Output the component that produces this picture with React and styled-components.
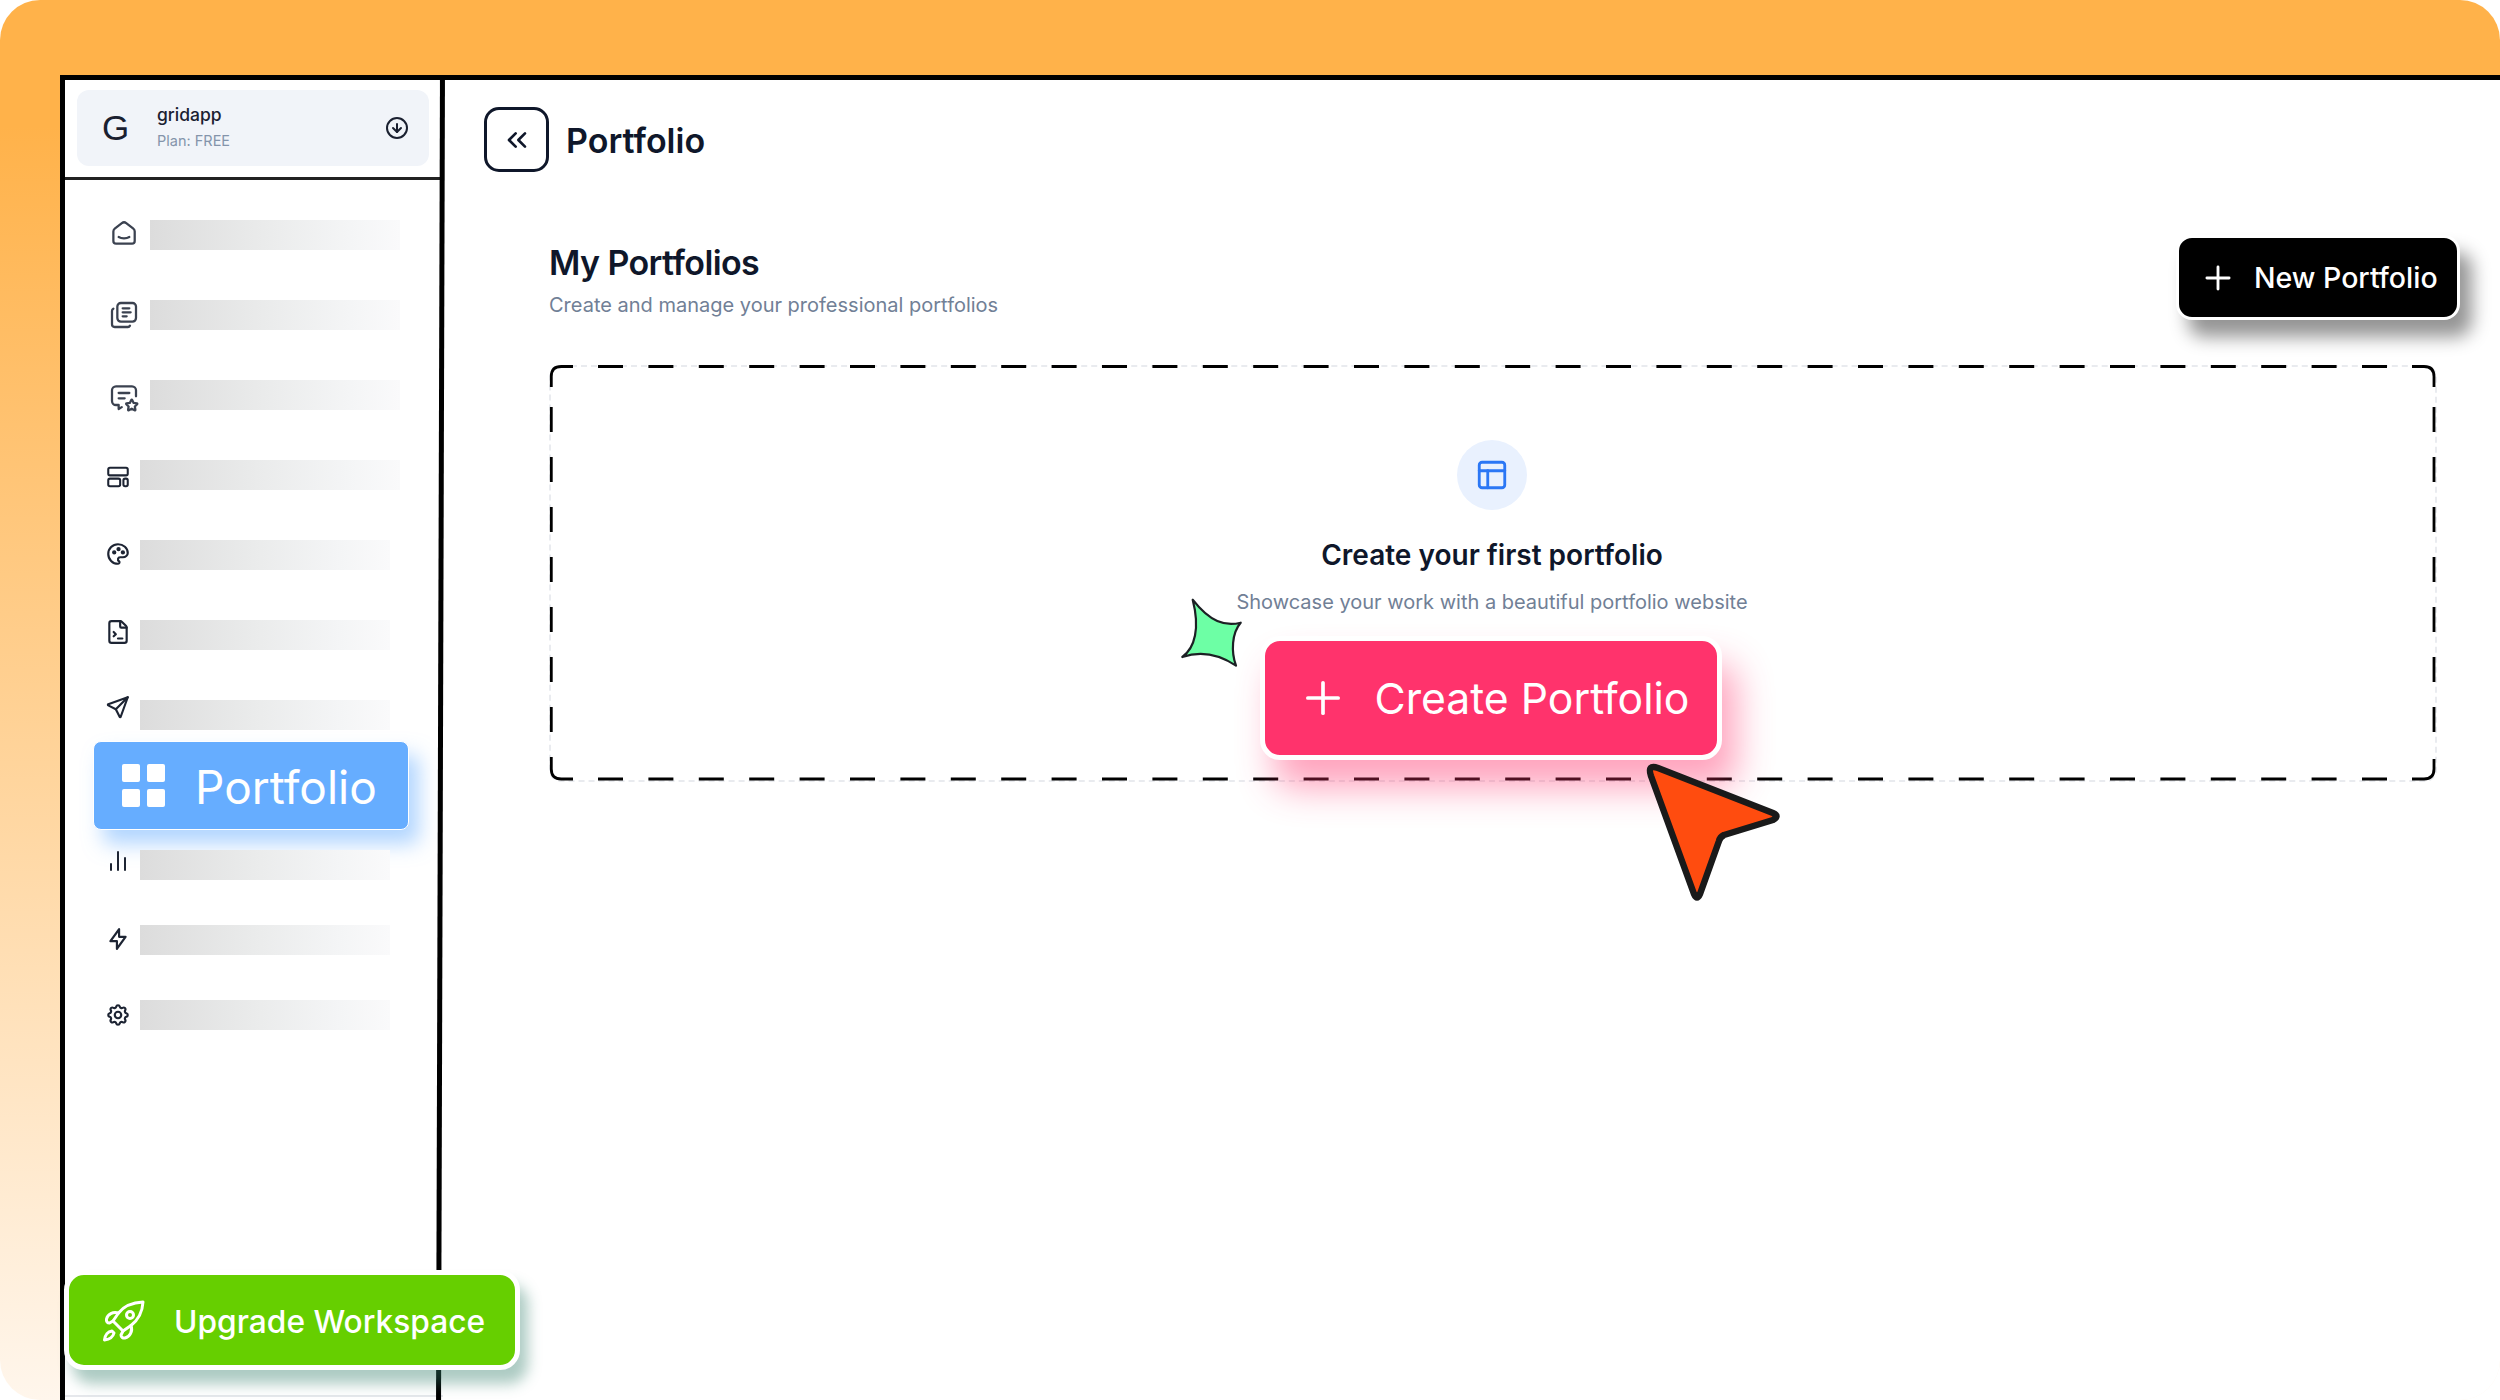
import styled, {createGlobalStyle} from "styled-components";
import {ChartNoAxesColumn, ChevronsLeft, CircleArrowDown, FileTerminal, PanelsTopLeft, Plus} from "lucide-react";
import {TbBolt, TbLibrary, TbMessageStar, TbPalette, TbSend, TbSettings, TbSmartHome} from "react-icons/tb";

const GlobalStyle = createGlobalStyle`
  * { box-sizing: border-box; }
  html, body { margin: 0; padding: 0; background: #fff; }
  body { font-family: "Inter", "Liberation Sans", sans-serif; color: #0f172a; }
`;

const Canvas = styled.div`
  width: 2500px;
  height: 1400px;
  overflow: hidden;
  border-radius: 40px;
  padding: 75px 0 0 60px;
  background: linear-gradient(180deg, #ffb24a 0%, #ffb24a 9%, #fff6ec 100%);
`;

const Frame = styled.div`
  display: flex;
  height: 100%;
  background: #fff;
  border-top: 5px solid #000;
  border-left: 5px solid #000;
`;

const Sidebar = styled.aside`
  position: relative;
  flex: 0 0 378px;
  display: flex;
  flex-direction: column;

  &::after {
    content: "";
    position: absolute;
    top: -2px;
    bottom: 0;
    right: 0;
    width: 5px;
    background: #000;
    transform: rotate(0.17deg);
  }
`;

const WorkspaceBar = styled.div`
  height: 100px;
  padding: 10px 0 0 12px;
  border-bottom: 3px solid #222;
`;

const WorkspaceCard = styled.div`
  display: flex;
  align-items: center;
  width: 352px;
  height: 76px;
  padding: 0 20px 0 25px;
  border-radius: 12px;
  background: #f1f4f9;
  color: #1a2030;
`;

const WorkspaceLetter = styled.span`
  width: 55px;
  font-family: "Liberation Sans", sans-serif;
  font-size: 35px;
`;

const WorkspaceText = styled.div`
  flex: 1;
  display: flex;
  flex-direction: column;
  gap: 7px;
  margin-top: -2px;
`;

const WorkspaceName = styled.span`
  font-size: 17.500px;
  font-weight: 500;
  line-height: 20px;
`;

const WorkspacePlan = styled.span`
  font-size: 14.500px;
  line-height: 17px;
  color: #8494ab;
`;

const Nav = styled.nav`
  display: flex;
  flex-direction: column;
  padding-top: 40px;
`;

const NavRow = styled.div`
  display: flex;
  align-items: center;
  height: 30px;
  margin-top: ${(p) => p.$top}px;
  padding-left: ${(p) => (p.$large ? 43 : 40)}px;
  gap: ${(p) => (p.$large ? 10 : 9)}px;
  color: ${(p) => (p.$large ? "#3b4250" : "#1d2433")};
`;

const IconSlot = styled.span`
  display: flex;
  flex: none;
  justify-content: center;
  width: ${(p) => (p.$large ? 32 : 26)}px;
  margin-bottom: ${(p) => p.$lift}px;
`;

const Skeleton = styled.div`
  width: ${(p) => p.$width}px;
  height: 30px;
  background: linear-gradient(90deg, #dcdcdc 0%, #eaebeb 45%, #f4f5f6 80%, #fafafb 100%);
`;

const ActiveItem = styled.div`
  display: flex;
  align-items: center;
  gap: 30px;
  width: 316px;
  height: 89px;
  margin: 11px 0 20px 28px;
  padding: 2px 0 0 28px;
  border: 1px solid #fff;
  border-radius: 8px;
  background: #66adff;
  color: #fff;
  font-size: 46px;
  box-shadow: 10px 14px 20px rgba(102, 173, 255, 0.5);
`;

const GridGlyph = styled.div`
  display: grid;
  grid-template-columns: 18px 18px;
  gap: 7px;
  margin-top: -2px;

  i {
    display: block;
    height: 18px;
    border-radius: 2px;
    background: #fff;
  }
`;

const SidebarFooter = styled.div`
  margin-top: auto;
  height: 5px;
  border-top: 2px solid #e6e8ec;
`;

const UpgradeButton = styled.button`
  position: absolute;
  z-index: 2;
  left: -1px;
  bottom: 30px;
  display: flex;
  align-items: center;
  gap: 29px;
  width: 456px;
  height: 100px;
  padding: 2px 0 0 34px;
  border: 5px solid #fff;
  border-radius: 20px;
  background: #66cf00;
  color: #fff;
  font: 500 31.700px "Inter", sans-serif;
  box-shadow: 8px 14px 14px rgba(50, 125, 105, 0.4);
`;

const Main = styled.main`
  flex: 1;
  min-width: 0;
  padding: 27px 0 0 41px;
`;

const PageHeader = styled.header`
  display: flex;
  align-items: center;
  gap: 17px;
`;

const CollapseButton = styled.button`
  display: grid;
  place-items: center;
  width: 65px;
  height: 65px;
  padding: 0;
  border: 3px solid #0f172a;
  border-radius: 15px;
  background: #fff;
  color: #0f172a;
`;

const PageTitle = styled.h1`
  margin: 2px 0 0;
  font-size: 34px;
  font-weight: 600;
`;

const Content = styled.section`
  width: 1888px;
  margin: 63px 0 0 65px;
`;

const SectionHead = styled.div`
  display: flex;
  justify-content: space-between;
  align-items: flex-start;
  height: 130px;
`;

const SectionTitle = styled.h2`
  margin: 8px 0 0;
  font-size: 34px;
  line-height: 40px;
  font-weight: 600;
  letter-spacing: -0.6px;
`;

const SectionSub = styled.p`
  margin: 9px 0 0;
  font-size: 20px;
  line-height: 26px;
  color: #718096;
`;

const NewButton = styled.button`
  display: flex;
  align-items: center;
  gap: 17px;
  width: 284px;
  height: 85px;
  margin-right: -23px;
  padding: 0 0 0 20px;
  border: 3px solid #fff;
  border-radius: 16px;
  background: #000;
  color: #fff;
  font: 500 28.500px "Inter", sans-serif;
  box-shadow: 12px 17px 18px rgba(0, 0, 0, 0.42);
`;

const EmptyBox = styled.div`
  position: relative;
  display: flex;
  flex-direction: column;
  align-items: center;
  height: 417px;
  padding: 73px 2px 0 0;
  border: 2px dashed #e9ebef;
  border-radius: 12px;
`;

const DashOverlay = styled.svg`
  position: absolute;
  left: -2px;
  top: -2px;
  overflow: visible;
`;

const IconCircle = styled.div`
  display: grid;
  place-items: center;
  width: 70px;
  height: 70px;
  border-radius: 50%;
  background: #e9f1fe;
  color: #2b77f5;
`;

const EmptyTitle = styled.h3`
  margin: 27px 0 0;
  font-size: 28px;
  line-height: 36px;
  font-weight: 600;
`;

const EmptySub = styled.p`
  margin: 16px 0 0;
  font-size: 20px;
  line-height: 26px;
  color: #718096;
`;

const CreateButton = styled.button`
  position: relative;
  display: flex;
  align-items: center;
  gap: 26px;
  width: 462px;
  height: 124px;
  margin: 21px 3px 0 0;
  padding: 0 0 0 32px;
  border: 5px solid #fff;
  border-radius: 20px;
  background: #ff336c;
  color: #fff;
  font: 400 42.700px "Inter", sans-serif;
  box-shadow: 14px 28px 36px rgba(255, 51, 108, 0.45);
`;

const Sticker = styled.svg`
  position: absolute;
  z-index: 3;
  left: ${(p) => p.$left}px;
  top: ${(p) => p.$top}px;
`;

const navTop = [
    {icon: TbSmartHome, width: 250, lift: 5},
    {icon: TbLibrary, width: 250, lift: 0},
    {icon: TbMessageStar, width: 250, lift: -3},
];

const navMiddle = [
    {icon: LayoutBlocks, width: 260, lift: -3},
    {icon: TbPalette, width: 250, lift: 3},
    {icon: FileTerminal, width: 250, lift: 6},
    {icon: TbSend, width: 250, lift: 16},
];

const navBottom = [
    {icon: ChartNoAxesColumn, width: 250, top: 0, lift: 8, size: 24},
    {icon: TbBolt, width: 250, top: 45, lift: 3},
    {icon: TbSettings, width: 250, top: 45, lift: 0},
];

function LayoutBlocks({size}) {
    return (
        <svg width={size} height={size} viewBox="0 0 24 24" fill="none" stroke="currentColor" strokeWidth="1.9">
            <rect x="3" y="3.5" width="18" height="7" rx="1.6"/>
            <rect x="3" y="13.5" width="11" height="7" rx="1.6"/>
            <rect x="17" y="13.5" width="4" height="7" rx="1.6"/>
        </svg>
    );
}

function RocketIcon() {
    return (
        <svg width="42" height="42" viewBox="0 0 42 42" fill="none" stroke="#fff" strokeWidth="3" strokeLinejoin="round" strokeLinecap="round">
            <path d="M40 2C30 2.5 21 6 15.5 13L10 21L20 31L28 25.5C35 20 39.5 11 40 2Z"/>
            <path d="M15.5 13C10 11.5 4.500 14 3.500 19C3 21.500 4.500 23 6.500 23L10 21"/>
            <path d="M28 25.500C30 31 27 37 22 38C20 38.500 18 37 18 35L20 31"/>
            <path d="M9 31C5 31.500 2 35 1.500 40C6 39.500 10 37 11 33Z"/>
            <circle cx="27" cy="15" r="3.500"/>
        </svg>
    );
}

function DashedBorder() {
    return (
        <DashOverlay width="1888" height="417" fill="none" stroke="#000" strokeWidth="2.8">
            <path d="M2.300 22V11.500Q2.300 1.500 12.300 1.500H24"/>
            <path d="M1863 1.500H1875Q1885 1.500 1885 11.500V22"/>
            <path d="M1885 394V404Q1885 414 1875 414H1863"/>
            <path d="M24 414H12.300Q2.300 414 2.300 404V392"/>
            <path d="M49 1.500H1863" strokeDasharray="25 25.400"/>
            <path d="M49 414H1863" strokeDasharray="25 25.400"/>
            <path d="M2.300 42V392" strokeDasharray="25 25"/>
            <path d="M1885 42V392" strokeDasharray="25 25"/>
        </DashOverlay>
    );
}

function App() {
    return (
        <>
            <GlobalStyle/>
            <Canvas>
                <Frame>
                    <Sidebar>
                        <WorkspaceBar>
                            <WorkspaceCard>
                                <WorkspaceLetter>G</WorkspaceLetter>
                                <WorkspaceText>
                                    <WorkspaceName>gridapp</WorkspaceName>
                                    <WorkspacePlan>Plan: FREE</WorkspacePlan>
                                </WorkspaceText>
                                <CircleArrowDown size={24} strokeWidth={2}/>
                            </WorkspaceCard>
                        </WorkspaceBar>
                        <Nav>
                            {navTop.map(({icon: Icon, width, lift}, i) => (
                                <NavRow key={i} $large $top={i ? 50 : 0}>
                                    <IconSlot $large $lift={lift}><Icon size={32} strokeWidth={1.7}/></IconSlot>
                                    <Skeleton $width={width}/>
                                </NavRow>
                            ))}
                            {navMiddle.map(({icon: Icon, width, lift}, i) => (
                                <NavRow key={i} $top={50}>
                                    <IconSlot $lift={lift}><Icon size={26} strokeWidth={2}/></IconSlot>
                                    <Skeleton $width={width}/>
                                </NavRow>
                            ))}
                            <ActiveItem>
                                <GridGlyph><i/><i/><i/><i/></GridGlyph>
                                Portfolio
                            </ActiveItem>
                            {navBottom.map(({icon: Icon, width, top, lift, size = 26}, i) => (
                                <NavRow key={i} $top={top}>
                                    <IconSlot $lift={lift}><Icon size={size} strokeWidth={2}/></IconSlot>
                                    <Skeleton $width={width}/>
                                </NavRow>
                            ))}
                        </Nav>
                        <SidebarFooter/>
                        <UpgradeButton>
                            <RocketIcon/>
                            Upgrade Workspace
                        </UpgradeButton>
                    </Sidebar>
                    <Main>
                        <PageHeader>
                            <CollapseButton><ChevronsLeft size={32} strokeWidth={2}/></CollapseButton>
                            <PageTitle>Portfolio</PageTitle>
                        </PageHeader>
                        <Content>
                            <SectionHead>
                                <div>
                                    <SectionTitle>My Portfolios</SectionTitle>
                                    <SectionSub>Create and manage your professional portfolios</SectionSub>
                                </div>
                                <NewButton><Plus size={38} strokeWidth={1.8}/>New Portfolio</NewButton>
                            </SectionHead>
                            <EmptyBox>
                                <DashedBorder/>
                                <IconCircle><PanelsTopLeft size={34} strokeWidth={2}/></IconCircle>
                                <EmptyTitle>Create your first portfolio</EmptyTitle>
                                <EmptySub>Showcase your work with a beautiful portfolio website</EmptySub>
                                <CreateButton><Plus size={52} strokeWidth={1.7}/>Create Portfolio</CreateButton>
                                <Sticker $left={619} $top={228} width="90" height="105" viewBox="0 0 90 105">
                                    <path
                                        d="M22.700 4.700C40 27 55 31.700 70.700 27.700C61.700 38 61 56.700 66 70.700C50 60 33 55 12.300 62C25 53 30 33 22.700 4.700Z"
                                        fill="#6dffa5" stroke="#1c2024" strokeWidth="2.200" strokeLinejoin="round"/>
                                </Sticker>
                                <Sticker $left={1089} $top={394} width="146" height="146" viewBox="0 0 146 146">
                                    <path
                                        d="M11 15Q7 3 18 7L133 52Q140 55 133 59L84 74Q80 76 79 80L60 133Q57 140 54 133Z"
                                        fill="#ff4c0f" stroke="#1a1a1a" strokeWidth="6.500" strokeLinejoin="round"/>
                                </Sticker>
                            </EmptyBox>
                        </Content>
                    </Main>
                </Frame>
            </Canvas>
        </>
    );
}

export default App;
